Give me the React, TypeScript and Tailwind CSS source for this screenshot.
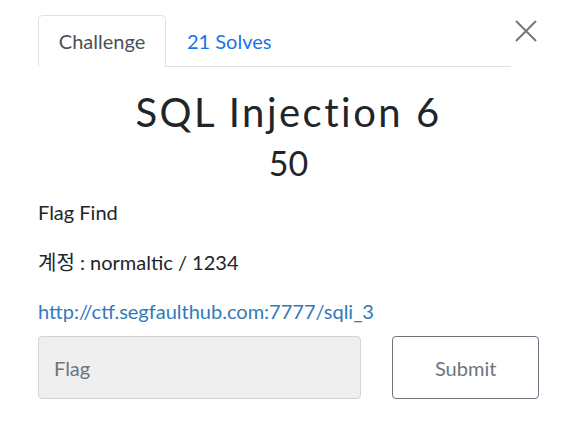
import React from 'react';

function App() {
  return (
    <div className="w-[576px] h-[421px] bg-white text-[#212529] relative overflow-hidden" style={{ fontFamily: 'Lato, "Noto Sans CJK KR", sans-serif' }}>
      {/* Close button */}
      <button className="absolute left-[514px] top-[19px] w-[24px] h-[24px] text-[#777]">
        <svg viewBox="0 0 24 24" width="24" height="24" fill="none" stroke="currentColor" strokeWidth="2">
          <path d="M2 2 L22 22 M22 2 L2 22" />
        </svg>
      </button>

      <div className="pl-[38px] pr-[37px] pt-[15px]">
        {/* Tabs */}
        <div className="flex w-[473px] border-b border-[#dee2e6] text-[20px]">
          <div className="-mb-px h-[52px] w-[128px] flex items-center justify-center border border-[#dee2e6] border-b-white rounded-t-[5px] bg-white text-[#495057]">
            Challenge
          </div>
          <div className="h-[51px] px-[21px] flex items-center text-[#1a73e8]">21 Solves</div>
        </div>

        {/* Title */}
        <h1 className="mt-[21px] text-center text-[40px] leading-[48px] tracking-[2.5px] text-[#212529]">SQL Injection 6</h1>
        <h2 className="mt-[7px] text-center text-[34px] leading-[40px] text-[#212529]">50</h2>

        <div className="mt-[15px] text-[20px] leading-[28px]">
          <p>Flag Find</p>
          <p className="mt-[22px]">계정 : normaltic / 1234</p>
          <p className="mt-[21px]">
            <a className="text-[#337ab7]">http://ctf.segfaulthub.com:7777/sqli_3</a>
          </p>
        </div>

        {/* Form */}
        <div className="mt-[11px] flex gap-[31px]">
          <input
            placeholder="Flag"
            className="w-[324px] h-[63px] rounded-[4px] border border-[#ced4da] bg-[#efefef] px-[15px] text-[20px] placeholder:text-[#6c757d] outline-none"
          />
          <button className="w-[147px] h-[63px] rounded-[4px] border border-[#6c757d] bg-white text-[20px] text-[#6c757d]">
            Submit
          </button>
        </div>
      </div>
    </div>
  );
}

export default App;
